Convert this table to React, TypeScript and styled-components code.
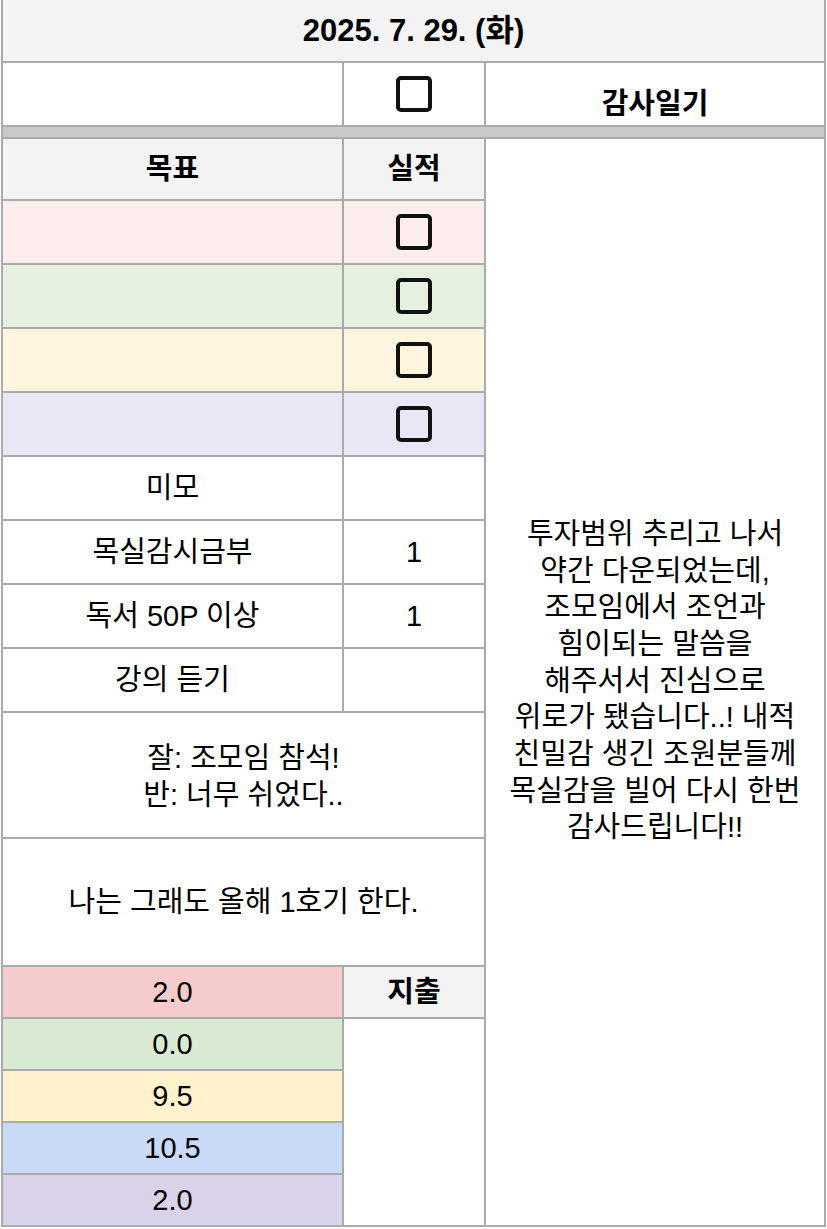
import styled, { createGlobalStyle } from "styled-components";

const GlobalStyle = createGlobalStyle`
	html, body {
		margin: 0;
		padding: 0;
		background: #ffffff;
	}
	body {
		font-family: "Liberation Sans", "Noto Sans CJK KR", sans-serif;
		color: #000;
	}
`;

const ROWS = [61, 62, 10, 60, 62, 62, 62, 62, 62, 62, 62, 62, 124, 126, 50, 50, 50, 50, 50];

const goals = [
	{ bg: "#fdeded" },
	{ bg: "#e6f0df" },
	{ bg: "#fef5de" },
	{ bg: "#e9e6f6" },
];

const habits = [
	{ label: "미모", value: "" },
	{ label: "목실감시금부", value: "1" },
	{ label: "독서 50P 이상", value: "1" },
	{ label: "강의 듣기", value: "" },
];

const hours = [
	{ value: "2.0", bg: "#f4cccc" },
	{ value: "0.0", bg: "#d9ead3" },
	{ value: "9.5", bg: "#fff2cc" },
	{ value: "10.5", bg: "#c9daf8" },
	{ value: "2.0", bg: "#d9d2e9" },
];

const gratitude = [
	"투자범위 추리고 나서",
	"약간 다운되었는데,",
	"조모임에서 조언과",
	"힘이되는 말씀을",
	"해주서서 진심으로",
	"위로가 됐습니다..! 내적",
	"친밀감 생긴 조원분들께",
	"목실감을 빌어 다시 한번",
	"감사드립니다!!",
];

const App = () => {
	return (
		<>
			<GlobalStyle />
			<Sheet>
				<Cell $span={3} $bg="#f3f3f3" $bold $size={31}>
					2025. 7. 29. (화)
				</Cell>

				<Cell />
				<Cell>
					<CheckBox />
				</Cell>
				<Cell $bold $align="flex-end">
					감사일기
				</Cell>

				<Band />

				<Cell $bg="#f3f3f3" $bold>
					목표
				</Cell>
				<Cell $bg="#f3f3f3" $bold>
					실적
				</Cell>
				<Gratitude>
					{gratitude.map((line) => (
						<Line key={line}>{line}</Line>
					))}
				</Gratitude>

				{goals.map((g, i) => (
					<Row key={i}>
						<Cell $bg={g.bg} />
						<Cell $bg={g.bg}>
							<CheckBox />
						</Cell>
					</Row>
				))}

				{habits.map((h) => (
					<Row key={h.label}>
						<Cell>{h.label}</Cell>
						<Cell>{h.value}</Cell>
					</Row>
				))}

				<Cell $span={2}>
					<Note>
						<Line>잘: 조모임 참석!</Line>
						<Line>반: 너무 쉬었다..</Line>
					</Note>
				</Cell>
				<Cell $span={2}>나는 그래도 올해 1호기 한다.</Cell>

				<Cell $bg={hours[0].bg}>{hours[0].value}</Cell>
				<Cell $bg="#f3f3f3" $bold>
					지출
				</Cell>
				<Cell $bg={hours[1].bg}>{hours[1].value}</Cell>
				<Cell $rows={4} />
				{hours.slice(2).map((h, i) => (
					<Cell key={i} $bg={h.bg}>
						{h.value}
					</Cell>
				))}
			</Sheet>
		</>
	);
};

const Sheet = styled.div`
	display: grid;
	grid-template-columns: 339px 140px 338px;
	grid-template-rows: ${ROWS.map((r) => `${r}px`).join(" ")};
	gap: 2px;
	width: fit-content;
	margin-left: 1px;
	padding: 0 2px 2px 2px;
	background: #ababab;
`;

const Row = styled.div`
	display: contents;
`;

const Cell = styled.div<{
	$span?: number;
	$rows?: number;
	$bg?: string;
	$bold?: boolean;
	$size?: number;
	$align?: string;
}>`
	grid-column: span ${(p) => p.$span ?? 1};
	grid-row: span ${(p) => p.$rows ?? 1};
	display: flex;
	align-items: ${(p) => p.$align ?? "center"};
	justify-content: center;
	padding-bottom: ${(p) => (p.$align === "flex-end" ? "3px" : "0")};
	background: ${(p) => p.$bg ?? "#ffffff"};
	font-size: ${(p) => p.$size ?? 29}px;
	font-weight: ${(p) => (p.$bold ? 700 : 400)};
	line-height: 1.2;
	text-align: center;
	box-sizing: border-box;
`;

const Band = styled.div`
	grid-column: span 3;
	background: #c9c9c9;
`;

const Gratitude = styled.div`
	grid-row: span 16;
	display: flex;
	flex-direction: column;
	align-items: center;
	justify-content: center;
	background: #ffffff;
	font-size: 29px;
	text-align: center;
	white-space: nowrap;
	padding-bottom: 2px;
`;

const Line = styled.div`
	height: 36.7px;
	line-height: 36.7px;
`;

const Note = styled.div`
	display: flex;
	flex-direction: column;
	align-items: center;
	padding-top: 4px;
`;

const CheckBox = styled.span`
	display: block;
	width: 36px;
	height: 36px;
	box-sizing: border-box;
	border: 4px solid #111;
	border-radius: 5px;
	background: transparent;
`;

export default App;
